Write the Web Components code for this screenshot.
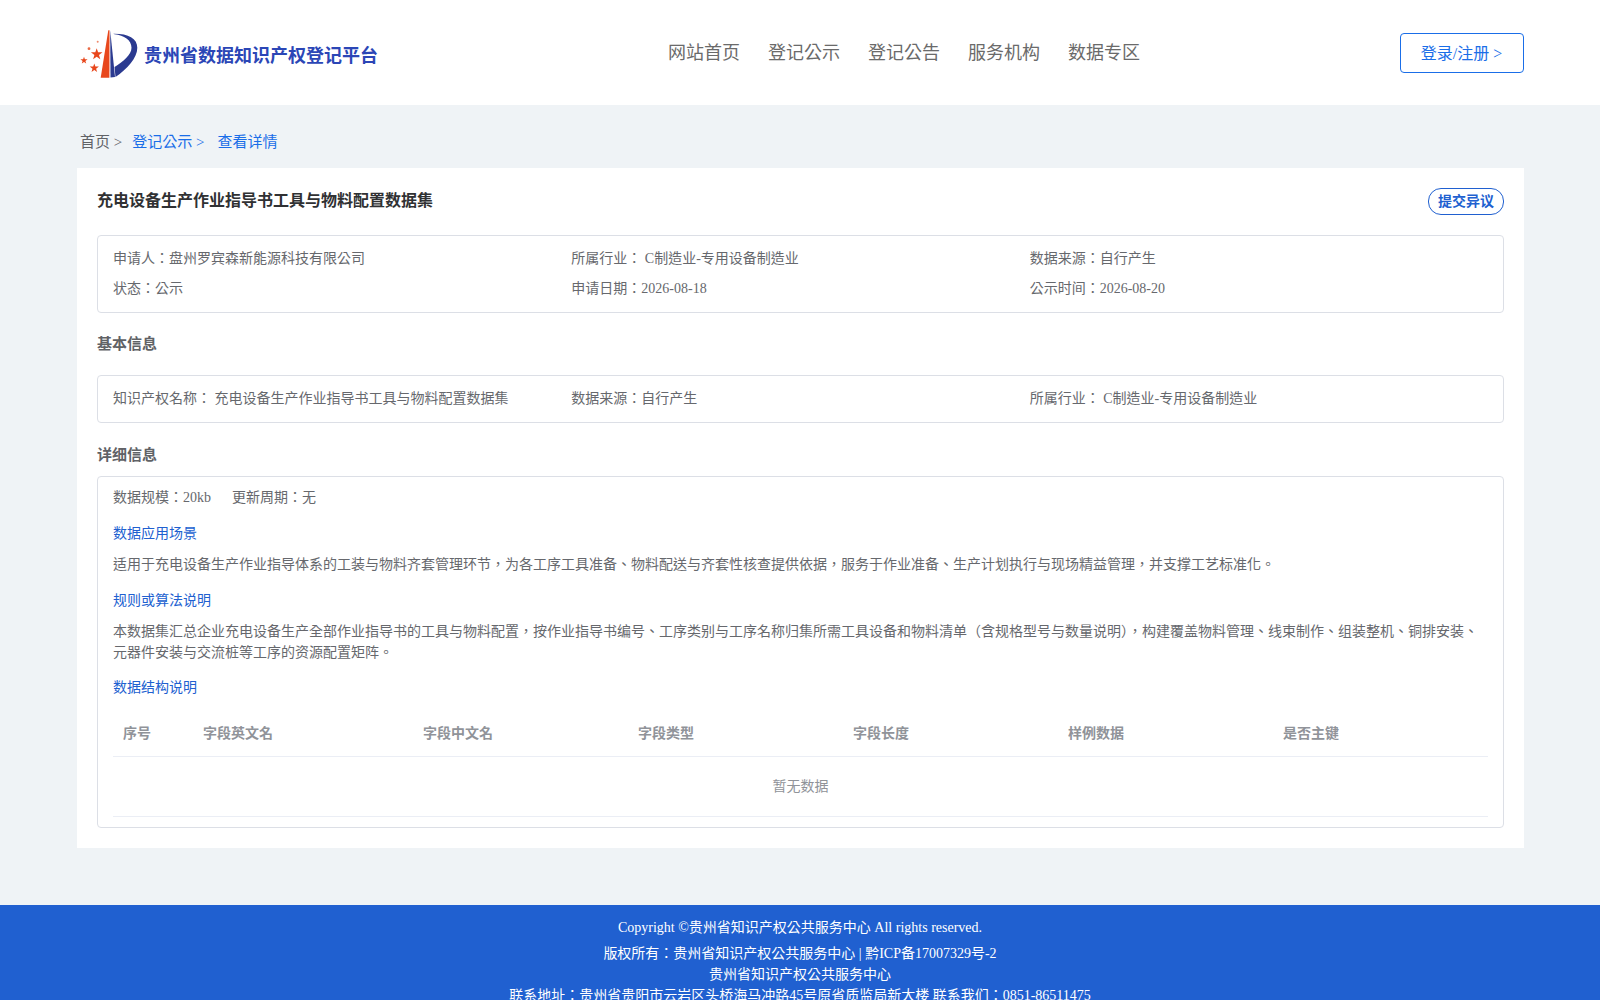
<!DOCTYPE html>
<html>
<head>
<meta charset="utf-8">
<title>贵州省数据知识产权登记平台</title>
<style>
  html, body { margin: 0; padding: 0; height: 1000px; overflow: hidden; background: #eff3f6; }
  body { font-family: "Liberation Serif", "Noto Sans CJK TC", serif; font-size: 14px; color: #66686d; }
</style>
</head>
<body>
<site-header></site-header>
<bread-crumb></bread-crumb>
<detail-card>
  <span slot="title">充电设备生产作业指导书工具与物料配置数据集</span>
  <info-box>
    <info-grid>
      <span>申请人：盘州罗宾森新能源科技有限公司</span>
      <span>所属行业： C制造业-专用设备制造业</span>
      <span>数据来源：自行产生</span>
      <span>状态：公示</span>
      <span>申请日期：2026-08-18</span>
      <span>公示时间：2026-08-20</span>
    </info-grid>
  </info-box>
  <section-title>基本信息</section-title>
  <info-box>
    <info-grid>
      <span>知识产权名称： 充电设备生产作业指导书工具与物料配置数据集</span>
      <span>数据来源：自行产生</span>
      <span>所属行业： C制造业-专用设备制造业</span>
    </info-grid>
  </info-box>
  <section-title class="tight">详细信息</section-title>
  <detail-info></detail-info>
</detail-card>
<site-footer></site-footer>

<script>
class SiteHeader extends HTMLElement {
  constructor() {
    super();
    this.attachShadow({ mode: 'open' });
    this.shadowRoot.innerHTML = `
      <style>
        :host { display: flex; align-items: center; height: 105px; background: #fff; padding: 0 76px 0 75px; box-sizing: border-box; }
        .logo { display: flex; align-items: center; width: 593px; flex: none; }
        .logo svg { width: 69px; height: 60px; display: block; flex: none; }
        .logo b { font-size: 18px; color: #2b46b6; margin-top: 2px; }
        nav { flex: 1; display: flex; gap: 28px; font-size: 18px; color: #6a6a6a; margin-top: -3px; }
        a.login { display: block; width: 124px; height: 40px; box-sizing: border-box; padding-right: 1px; line-height: 40px; text-align: center; border: 1px solid #1a6ee8; border-radius: 4px; color: #1a6ee8; font-size: 16px; background: #fff; }
      </style>
      <div class="logo">
        <svg viewBox="75 22 69 60">
          <polygon points="100.700,76.700 108.300,29.300 109.500,29.300 109.400,76.700" fill="#e8471c"/>
          <polygon points="110.200,29.300 110.500,76.500 115,76" fill="#2b3a90"/>
          <path d="M113.300 32.700 C128 32.500 137.300 37 137.300 46.700 C137.300 57 127 68 115.500 76 L114.500 66 C123 60.500 131.500 54 131.500 46.700 C131.500 39 124 34.500 114.500 33.300 Z" fill="#2b3a90"/>
          <polygon points="96.700,47.200 98.100,51.200 102.500,51.200 99,53.900 100.300,58.200 96.700,55.700 93.100,58.200 94.400,53.900 90.900,51.200 95.300,51.200" fill="#e8471c"/>
          <polygon points="84,55.800 84.900,58.300 87.600,58.300 85.400,60 86.200,62.600 84,61.100 81.800,62.600 82.600,60 80.400,58.300 83.100,58.300" fill="#e8471c"/>
          <polygon points="94.300,62.500 95.400,65.600 98.900,65.600 96.100,67.700 97.100,71 94.300,69 91.500,71 92.500,67.700 89.700,65.600 93.200,65.600" fill="#e8471c"/>
          <circle cx="89" cy="47.700" r="1.400" fill="#ea6a45"/>
          <circle cx="97.700" cy="40.700" r="1" fill="#ee8a6c"/>
        </svg>
        <b>贵州省数据知识产权登记平台</b>
      </div>
      <nav><span>网站首页</span><span>登记公示</span><span>登记公告</span><span>服务机构</span><span>数据专区</span></nav>
      <a class="login">登录/注册 &gt;</a>`;
  }
}
customElements.define('site-header', SiteHeader);

class BreadCrumb extends HTMLElement {
  constructor() {
    super();
    this.attachShadow({ mode: 'open' });
    this.shadowRoot.innerHTML = `
      <style>
        :host { display: flex; height: 63px; box-sizing: border-box; padding: 7px 0 0 80px; align-items: center; font-size: 15px; color: #606266; }
        span { margin-right: 10px; }
        .on { color: #1a6ee8; }
        .end { margin-left: 3px; }
      </style>
      <span>首页 &gt;</span><span class="on">登记公示 &gt;</span><span class="on end">查看详情</span>`;
  }
}
customElements.define('bread-crumb', BreadCrumb);

class DetailCard extends HTMLElement {
  constructor() {
    super();
    this.attachShadow({ mode: 'open' });
    this.shadowRoot.innerHTML = `
      <style>
        :host { display: block; width: 1447px; height: 680px; box-sizing: border-box; margin-left: 77px; padding: 20px; background: #fff; }
        .top { display: flex; justify-content: space-between; height: 47px; }
        .title { font-weight: bold; font-size: 16px; color: #303133; line-height: 26px; }
        .btn { width: 76px; height: 27px; box-sizing: border-box; border: 1px solid #2060d0; border-radius: 13px; font-weight: bold; font-size: 14px; line-height: 25px; color: #2060d0; text-align: center; }
      </style>
      <div class="top"><div class="title"><slot name="title"></slot></div><div class="btn">提交异议</div></div>
      <slot></slot>`;
  }
}
customElements.define('detail-card', DetailCard);

class InfoBox extends HTMLElement {
  constructor() {
    super();
    this.attachShadow({ mode: 'open' });
    this.shadowRoot.innerHTML = `
      <style>
        :host { display: block; border: 1px solid #dcdfe6; border-radius: 4px; padding: 6px 15px 10px; }
      </style>
      <slot></slot>`;
  }
}
customElements.define('info-box', InfoBox);

class InfoGrid extends HTMLElement {
  constructor() {
    super();
    this.attachShadow({ mode: 'open' });
    this.shadowRoot.innerHTML = `
      <style>
        :host { display: grid; grid-template-columns: repeat(3, 1fr); grid-auto-rows: 30px; align-items: center; }
      </style>
      <slot></slot>`;
  }
}
customElements.define('info-grid', InfoGrid);

class SectionTitle extends HTMLElement {
  constructor() {
    super();
    this.attachShadow({ mode: 'open' });
    this.shadowRoot.innerHTML = `
      <style>
        :host { display: block; height: 62px; line-height: 62px; font-weight: bold; font-size: 15px; color: #606266; }
        :host(.tight) { height: 53px; line-height: 64px; }
      </style>
      <slot></slot>`;
  }
}
customElements.define('section-title', SectionTitle);

class DetailInfo extends HTMLElement {
  constructor() {
    super();
    this.attachShadow({ mode: 'open' });
    const cols = ['序号','字段英文名','字段中文名','字段类型','字段长度','样例数据','是否主键'];
    this.shadowRoot.innerHTML = `
      <style>
        :host { display: block; border: 1px solid #dcdfe6; border-radius: 4px; padding: 10px 15px 10px; height: 352px; box-sizing: border-box; line-height: 22px; }
        .meta { display: flex; gap: 21px; }
        h4 { margin: 15px 0 9px; font-weight: normal; font-size: 14px; color: #2060d0; line-height: 22px; }
        .first { margin-top: 14px; }
        .last { margin-top: 14px; margin-bottom: 10px; }
        p { margin: 0; line-height: 21px; }
        .row { display: grid; grid-template-columns: 80px 220px 215px 215px 215px 215px 1fr; height: 48px; box-sizing: border-box; padding-top: 3px; align-items: center; border-bottom: 1px solid #ebeef5; color: #909399; font-weight: bold; }
        .row span { padding-left: 10px; }
        .empty { height: 59px; line-height: 60px; text-align: center; color: #909399; border-bottom: 1px solid #ebeef5; }
      </style>
      <div class="meta"><span>数据规模：20kb</span><span>更新周期：无</span></div>
      <h4 class="first">数据应用场景</h4>
      <p>适用于充电设备生产作业指导体系的工装与物料齐套管理环节，为各工序工具准备、物料配送与齐套性核查提供依据，服务于作业准备、生产计划执行与现场精益管理，并支撑工艺标准化。</p>
      <h4>规则或算法说明</h4>
      <p>本数据集汇总企业充电设备生产全部作业指导书的工具与物料配置，按作业指导书编号、工序类别与工序名称归集所需工具设备和物料清单（含规格型号与数量说明），构建覆盖物料管理、线束制作、组装整机、铜排安装、元器件安装与交流桩等工序的资源配置矩阵。</p>
      <h4 class="last">数据结构说明</h4>
      <div class="row">${cols.map(c => `<span>${c}</span>`).join('')}</div>
      <div class="empty">暂无数据</div>`;
  }
}
customElements.define('detail-info', DetailInfo);

class SiteFooter extends HTMLElement {
  constructor() {
    super();
    this.attachShadow({ mode: 'open' });
    this.shadowRoot.innerHTML = `
      <style>
        :host { display: block; margin-top: 57px; height: 95px; overflow: hidden; background: #2060d0; color: #fff; text-align: center; font-size: 14px; line-height: 21px; padding-top: 12px; box-sizing: border-box; }
        p { margin: 0; }
        .c { margin-bottom: 5px; }
      </style>
      <p class="c">Copyright ©贵州省知识产权公共服务中心 All rights reserved.</p>
      <p>版权所有：贵州省知识产权公共服务中心 | 黔ICP备17007329号-2</p>
      <p>贵州省知识产权公共服务中心</p>
      <p>联系地址：贵州省贵阳市云岩区头桥海马冲路45号原省质监局新大楼 联系我们：0851-86511475</p>`;
  }
}
customElements.define('site-footer', SiteFooter);
</script>
</body>
</html>
